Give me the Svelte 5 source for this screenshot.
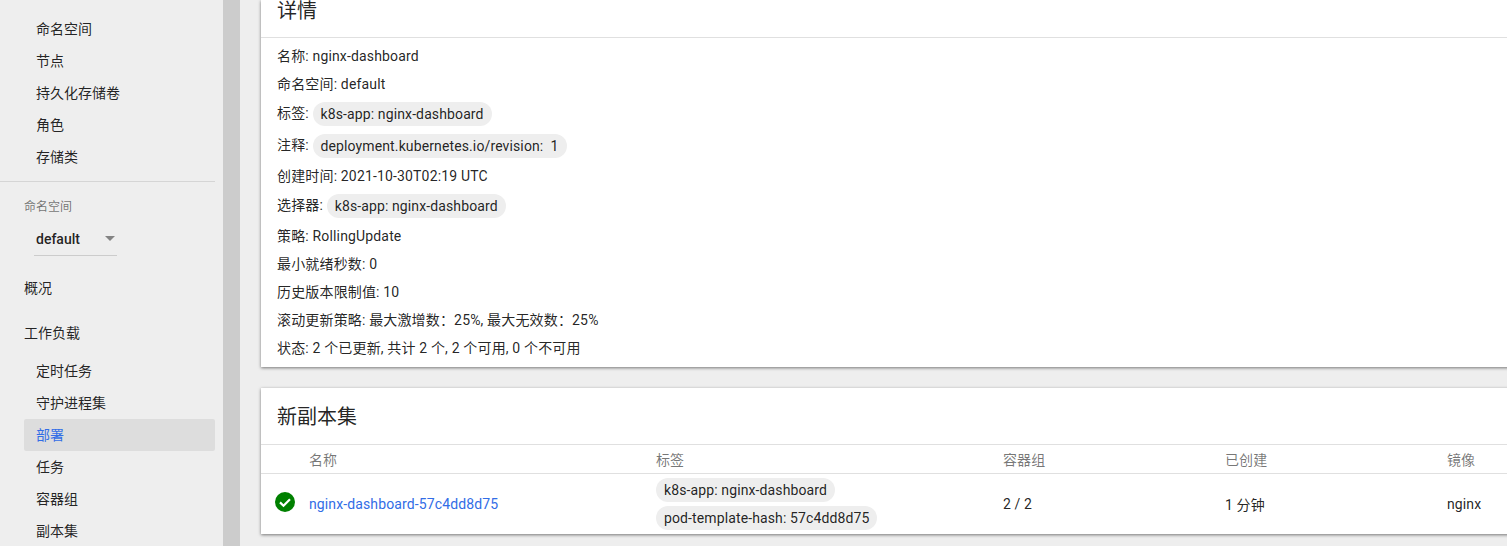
<script lang="ts">
  const clusterItems = ['命名空间', '节点', '持久化存储卷', '角色', '存储类'];
  const workloadItems = ['定时任务', '守护进程集', '部署', '任务', '容器组', '副本集'];
  const columns = ['', '名称', '标签', '容器组', '已创建', '镜像'];
</script>

<div class="page">
  <aside class="nav">
    <ul class="group">
      {#each clusterItems as item}
        <li class="item">{item}</li>
      {/each}
    </ul>
    <div class="ns">
      <div class="ns-label">命名空间</div>
      <div class="ns-select">
        <span>default</span>
        <i class="caret"></i>
      </div>
    </div>
    <div class="top-link">概况</div>
    <div class="top-link workloads">工作负载</div>
    <ul class="group">
      {#each workloadItems as item}
        <li class="item" class:active={item === '部署'}>{item}</li>
      {/each}
    </ul>
  </aside>
  <div class="scrollbar"></div>

  <main class="content">
    <section class="card">
      <h2 class="title first">详情</h2>
      <div class="details">
        <div class="row">名称: nginx-dashboard</div>
        <div class="row">命名空间: default</div>
        <div class="row tall">标签: <span class="chip">k8s-app: nginx-dashboard</span></div>
        <div class="row tall">注释: <span class="chip">deployment.kubernetes.io/revision:&nbsp; 1</span></div>
        <div class="row">创建时间: 2021-10-30T02:19 UTC</div>
        <div class="row tall">选择器: <span class="chip">k8s-app: nginx-dashboard</span></div>
        <div class="row">策略: RollingUpdate</div>
        <div class="row">最小就绪秒数: 0</div>
        <div class="row">历史版本限制值: 10</div>
        <div class="row">滚动更新策略: 最大激增数：25%, 最大无效数：25%</div>
        <div class="row">状态: 2 个已更新, 共计 2 个, 2 个可用, 0 个不可用</div>
      </div>
    </section>

    <section class="card second">
      <h2 class="title">新副本集</h2>
      <div class="grid head">
        {#each columns as c}<div>{c}</div>{/each}
      </div>
      <div class="grid body">
        <div class="status">
          <svg width="20" height="20" viewBox="0 0 20 20">
            <circle cx="10" cy="10" r="10" fill="#008000" />
            <path d="M5 10.4l3.5 3.4L15 7.2" fill="none" stroke="#fff" stroke-width="2.2" />
          </svg>
        </div>
        <a class="link" href="#rs">nginx-dashboard-57c4dd8d75</a>
        <div class="chips">
          <span class="chip">k8s-app: nginx-dashboard</span>
          <span class="chip">pod-template-hash: 57c4dd8d75</span>
        </div>
        <div>2 / 2</div>
        <div>1 分钟</div>
        <div>nginx</div>
      </div>
    </section>
  </main>
</div>

<style>
  :global(body) { margin: 0; background: #eee; }
  .page {
    display: flex;
    height: 546px;
    overflow: hidden;
    background: #eee;
    font-family: Roboto, "Noto Sans CJK SC", sans-serif;
    font-size: 14px;
    color: rgba(0, 0, 0, 0.87);
  }
  .nav { width: 215px; flex: none; padding: 13px 8px 0 0; }
  .group { list-style: none; margin: 0; padding: 0 0 0 24px; }
  .item { height: 32px; line-height: 32px; padding-left: 12px; border-radius: 2px; }
  .item.active { background: #ddd; color: #326de6; }
  .ns { border-top: 1px solid #d5d5d5; margin-top: 8px; padding: 17px 0 0 24px; height: 79px; }
  .ns-label { font-size: 12px; line-height: 16px; color: rgba(0, 0, 0, 0.54); }
  .ns-select {
    display: flex;
    align-items: center;
    justify-content: space-between;
    width: 79px;
    height: 33px;
    margin: 7px 0 0 10px;
    padding: 0 2px;
    border-bottom: 1px solid #ccc;
    font-weight: 500;
  }
  .caret { width: 0; height: 0; border: 5px solid transparent; border-top-color: rgba(0, 0, 0, 0.45); border-bottom: 0; }
  .top-link { padding-left: 24px; line-height: 20px; }
  .workloads { margin-top: 25px; margin-bottom: 12px; }
  .scrollbar { width: 17px; flex: none; background: #ccc; }
  .content { flex: 1; min-width: 0; padding-left: 21px; overflow: hidden; letter-spacing: 0.12px; }
  .card {
    width: 1400px;
    background: #fff;
    box-shadow: 0 1px 3px rgba(0, 0, 0, 0.5);
  }
  .title {
    margin: 0;
    padding: 17px 16px 15px;
    font-size: 20px;
    font-weight: 400;
    line-height: 24px;
    letter-spacing: 0;
    border-bottom: 1px solid #e0e0e0;
  }
  .title.first { padding: 0 16px 15px; line-height: 22px; }
  .details { padding: 4px 16px 5px; letter-spacing: 0.16px; }
  .row { height: 28px; box-sizing: border-box; padding-bottom: 2px; display: flex; align-items: center; white-space: pre-wrap; }
  .row.tall { height: 32px; padding-bottom: 4px; }
  .row .chip { margin: 4px 0 0; letter-spacing: 0.12px; }
  .chip {
    display: inline-block;
    height: 24px;
    line-height: 24px;
    padding: 0 8px;
    border-radius: 12px;
    background: #eee;
  }
  .second { margin-top: 21px; }
  .grid {
    display: grid;
    grid-template-columns: 48px 347px 347px 222px 222px 1fr;
    align-items: center;
  }
  .head { height: 28px; border-bottom: 1px solid #e0e0e0; color: rgba(0, 0, 0, 0.54); }
  .body { height: 60px; }
  .status { display: flex; padding-left: 14px; margin-top: -5px; }
  .link { color: #326de6; text-decoration: none; }
  .chips { display: flex; flex-direction: column; align-items: flex-start; gap: 4px; }
</style>
